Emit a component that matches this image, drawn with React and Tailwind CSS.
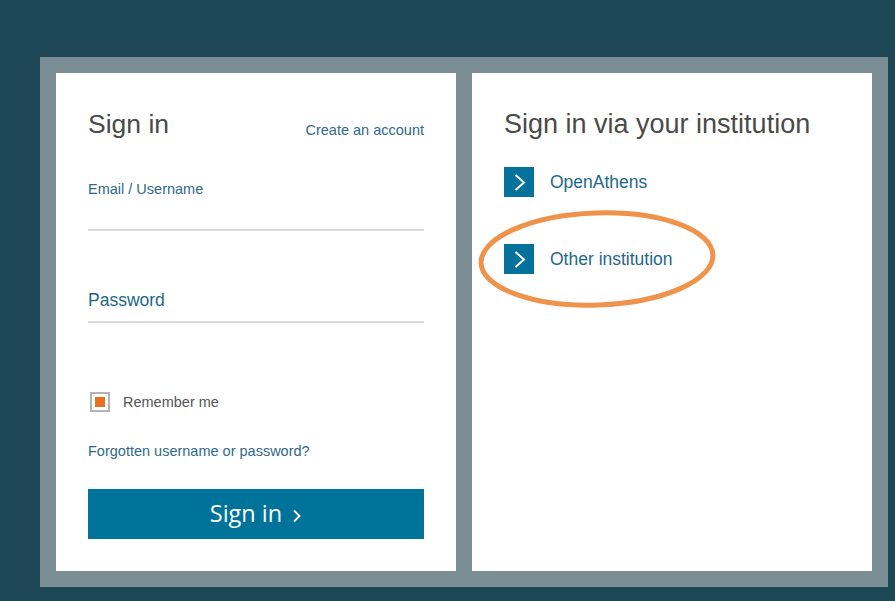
import React from 'react';

const Chevron = () => (
  <svg width="30" height="30" viewBox="0 0 30 30" className="shrink-0">
    <rect width="30" height="30" fill="#04729a" />
    <path d="M11.5 8 L20 15.5 L11.5 23" fill="none" stroke="#fff" strokeWidth="2" />
  </svg>
);

const InstitutionLink = ({ label }) => (
  <a href="#" className="flex items-center gap-4 text-[17.5px] leading-6 text-[#1f6887]">
    <Chevron />
    <span>{label}</span>
  </a>
);

const App = () => {
  return (
    <div
      className="w-full h-[601px] bg-[#1d4755] pt-[57px] pl-10"
      style={{ fontFamily: '"Liberation Sans", Arial, sans-serif' }}
    >
      <div className="w-[848px] h-[530px] bg-[#7c8e95] p-4 flex gap-4">
        {/* Sign in form */}
        <div className="w-[400px] h-[498px] bg-white px-8 pt-[35px]">
          <div className="flex items-end justify-between">
            <h1 className="text-[26.5px] leading-8 text-[#4a4a4a]">Sign in</h1>
            <a href="#" className="text-[14.5px] leading-5 text-[#2f6a88]">Create an account</a>
          </div>

          <div className="mt-[39px]">
            <label className="block text-[14.5px] leading-5 text-[#2f6a88]">Email / Username</label>
            <div className="h-[32px] border-b-2 border-[#dadada]" />
          </div>

          <div className="mt-[57px]">
            <label className="block text-[17.5px] leading-6 text-[#1d6786]">Password</label>
            <div className="h-[9px] border-b-2 border-[#dadada] box-content" />
          </div>

          <div className="mt-[69px] flex items-center gap-[13px] pl-[2px]">
            <div className="w-5 h-5 border-2 border-[#b4b4b4] flex items-center justify-center">
              <div className="w-[10px] h-[10px] bg-[#e8711f]" />
            </div>
            <span className="text-[14.5px] leading-5 text-[#555555]">Remember me</span>
          </div>

          <a href="#" className="block mt-[29px] text-[14.5px] leading-5 text-[#2f6a88]">
            Forgotten username or password?
          </a>

          <button
            className="mt-[28px] w-full h-[50px] bg-[#00739a] text-white flex items-center justify-center gap-[10px]"
            style={{ fontFamily: '"Open Sans", "Noto Sans", sans-serif' }}
          >
            <span className="text-[23.5px] leading-none">Sign in</span>
            <svg width="10" height="14" viewBox="0 0 10 14" className="mt-[3px]">
              <path d="M2 1.5 L7.5 7 L2 12.5" fill="none" stroke="#fff" strokeWidth="1.8" />
            </svg>
          </button>
        </div>

        {/* Institution sign in */}
        <div className="relative w-[400px] h-[498px] bg-white px-8 pt-[35px]">
          <h2 className="text-[27px] leading-8 text-[#4a4a4a]">Sign in via your institution</h2>
          <div className="mt-[27px] flex flex-col gap-[47px]">
            <InstitutionLink label="OpenAthens" />
            <InstitutionLink label="Other institution" />
          </div>

          {/* hand-drawn highlight */}
          <svg
            className="absolute left-[3px] top-[135px] pointer-events-none"
            width="244"
            height="102"
            viewBox="0 0 244 102"
          >
            <ellipse
              cx="122"
              cy="51"
              rx="116"
              ry="46"
              fill="none"
              stroke="#f0934a"
              strokeWidth="5"
              transform="rotate(-2 122 51)"
            />
          </svg>
        </div>
      </div>
    </div>
  );
};

export default App;
